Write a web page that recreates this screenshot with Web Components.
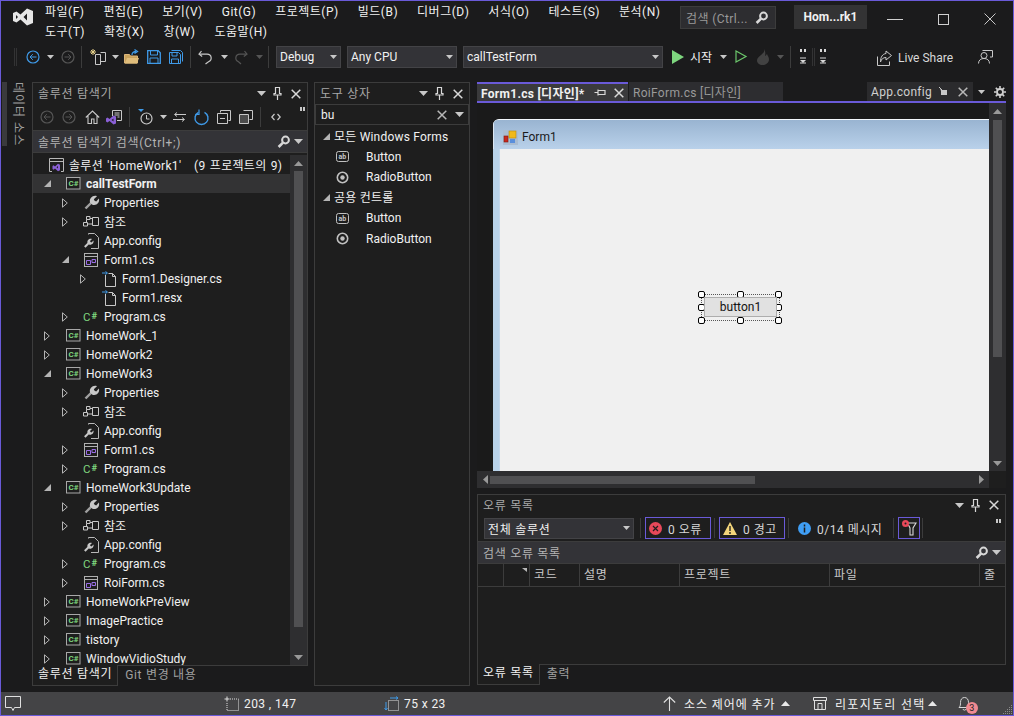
<!DOCTYPE html>
<html lang="ko">
<head>
<meta charset="utf-8">
<title>HomeWork1</title>
<style>
	html, body { margin: 0; padding: 0; background: #1b1b1c; }
	body {
		font: 12px Roboto, "Noto Sans CJK KR", sans-serif;
		color: #f1f1f1;
	}
</style>
</head>
<body>
<vs-app>
	<vs-titlebar slot="title"></vs-titlebar>
	<vs-toolbar slot="tools"></vs-toolbar>
	<vs-side-tab slot="side">데이터 소스</vs-side-tab>
	<vs-solution-explorer slot="left"></vs-solution-explorer>
	<vs-toolbox slot="mid"></vs-toolbox>
	<vs-document-well slot="doc"></vs-document-well>
	<vs-error-list slot="err"></vs-error-list>
	<vs-statusbar slot="status"></vs-statusbar>
</vs-app>

<script>
const GREY = "#c8c8c8";
const BLUE = "#3f9ae8";

// every icon: [width, height, markup]
const ICONS = {
	logo: [20, 18, `<path fill="#e6e6e6" fill-rule="evenodd" d="M14 .5l6 2.5v12l-6 2.5-6.5-6-4 3L0 13V5l3.5-1.500 4 3zM14 5.500L10.500 9 14 12.500zM3 7v4l2-2z"/>`],
	search: [13, 14, `<circle cx="8.500" cy="5" r="3.400" fill="none" stroke="#d8d8d8" stroke-width="2"/><path d="M6 7.600L1.600 12" stroke="#d8d8d8" stroke-width="2.600"/>`],
	min: [16, 1, `<rect width="16" height="1" fill="#d0d0d0"/>`],
	max: [11, 11, `<rect x=".5" y=".5" width="10" height="10" fill="none" stroke="#d0d0d0"/>`],
	winclose: [12, 12, `<path d="M.5.5l11 11M11.500.5l-11 11" stroke="#c8c8c8" fill="none"/>`],
	grip: [5, 18, `<path d="M1 1h3M1 3h3M1 5h3M1 7h3M1 9h3M1 11h3M1 13h3M1 15h3M1 17h3" stroke="#4c4c4c" stroke-dasharray="1 1"/>`],
	back: [14, 14, `<circle cx="7" cy="7" r="6" fill="none" stroke="${BLUE}" stroke-width="1.200"/><path d="M10.500 7H4M6.800 4.200L4 7l2.800 2.800" fill="none" stroke="${BLUE}"/>`],
	backoff: [14, 14, `<circle cx="7" cy="7" r="6" fill="none" stroke="#555" stroke-width="1.200"/><path d="M10.500 7H4M6.800 4.200L4 7l2.800 2.800" fill="none" stroke="#555"/>`],
	fwdoff: [14, 14, `<circle cx="7" cy="7" r="6" fill="none" stroke="#555" stroke-width="1.200"/><path d="M3.500 7H10M7.200 4.200L10 7l-2.800 2.800" fill="none" stroke="#555"/>`],
	arrow: [7, 4, `<path d="M0 0h7L3.500 4z" fill="${GREY}"/>`],
	arrowoff: [7, 4, `<path d="M0 0h7L3.500 4z" fill="#555"/>`],
	arrowup: [9, 5, `<path d="M0 5h9L4.500 0z" fill="#e8e8e8"/>`],
	newproj: [16, 16, `<path d="M3 0v6M0 3h6M1 1l4 4M5 1L1 5" stroke="#e8d28a"/><path d="M5.500 5.500h5v10h-5zM10.500 3.500h5v9h-5" fill="none" stroke="${GREY}"/>`],
	open: [16, 15, `<path d="M.5 5.500h5l1 1.500h7v7H.5z" fill="#c9a25c" stroke="#dcb67a"/><path d="M3 9h12l-2 5.500H.8z" fill="#e0bd7b"/><path d="M8 6c0-2.500 2-3.500 4-3.500M10.500.5l3 2-3 2" fill="none" stroke="${BLUE}" stroke-width="1.300"/>`],
	save: [14, 14, `<path d="M.7.7h10.500l2.100 2.100v10.500H.7z" fill="none" stroke="${BLUE}" stroke-width="1.300"/><path d="M3.500 1v4h7V1M3 13V8h8v5" fill="none" stroke="${BLUE}"/>`],
	saveall: [14, 14, `<path d="M2.500.5h9l2 2v9M.5 2.500h9l2 2v9H.5z" fill="none" stroke="${BLUE}"/><path d="M3 3v3h5V3M2.500 13V9h7v4" fill="none" stroke="${BLUE}"/>`],
	undo: [16, 16, `<path d="M3.500 2L1 5.200l3.200 2.400" fill="none" stroke="${GREY}" stroke-width="1.200"/><path d="M1.500 5.200H9c5 0 5.500 6 1.500 7.500L7.500 15" fill="none" stroke="${GREY}" stroke-width="1.200"/>`],
	redo: [14, 16, `<path d="M10.500 2L13 5.200 9.800 7.600" fill="none" stroke="#555" stroke-width="1.200"/><path d="M12.500 5.200H6C1 5.200.5 11 4.500 12.700L7 15" fill="none" stroke="#555" stroke-width="1.200"/>`],
	play: [12, 14, `<path d="M0 0l12 7-12 7z" fill="#7ed67e"/>`],
	run: [12, 13, `<path d="M1 1l10 5.500L1 12z" fill="none" stroke="#6cc76c" stroke-width="1.200"/>`],
	flame: [14, 16, `<path d="M8 0c1 3-1 4-3 6C3 8 1 9 1 11.500 1 14 3.500 16 6.500 16S13 14 13 10.500C13 8 11.500 7 11 5c-1 1-1.500 2-2 2 .5-2 .5-5-1-7z" fill="#424242"/>`],
	griptop: [6, 16, `<path d="M0 0h2v3H0zM4 0h2v3H4z" fill="#d8d8d8"/><path d="M0 9h6M0 14h6" stroke="#d8d8d8"/><path d="M0 11h6l-3 3z" fill="#d8d8d8"/>`],
	share: [15, 16, `<path d="M.5 6.500v9h12v-4" fill="none" stroke="${GREY}"/><path d="M9 1l5.500 4.500L9 10V7.500C6 7.500 4.500 9 3.500 12 3.500 7 5.500 4 9 3.500z" fill="none" stroke="${GREY}"/>`],
	feedback: [15, 15, `<path d="M4.500 1.500h10v6.500H12" fill="none" stroke="${GREY}"/><circle cx="6" cy="6.500" r="3" fill="none" stroke="${GREY}"/><path d="M.5 14.500c0-3.500 2.500-5 5.500-5s5.500 1.500 5.500 5" fill="none" stroke="${GREY}"/>`],
	drop: [9, 5, `<path d="M0 0h9L4.500 5z" fill="${GREY}"/>`],
	pin: [9, 13, `<path d="M2.500.5h4v6h1.500v1.500H1V6.500h1.500zM4.500 8v5" fill="none" stroke="#d8d8d8" stroke-width="1.200"/>`],
	hpin: [12, 9, `<path d="M.5 4.500H4M4 1.500v6M4 2.500h7v4H4" fill="none" stroke="#d8d8d8" stroke-width="1.200"/>`],
	close: [10, 10, `<path d="M.7.7l8.600 8.600M9.300.7L.7 9.300" stroke="#d8d8d8" stroke-width="1.500"/>`],
	closedim: [10, 10, `<path d="M.7.7l8.600 8.600M9.300.7L.7 9.300" stroke="#b8b8b8" stroke-width="1.500"/>`],
	tabpin: [10, 9, `<path d="M1 1l2 2h5v5H2V4z" fill="#c8c8c8"/><path d="M0 0l3 3" stroke="#c8c8c8"/>`],
	gear: [12, 12, `<circle cx="6" cy="6" r="3" fill="none" stroke="#d0d0d0" stroke-width="1.800"/><path d="M6 0v2.500M6 9.500V12M0 6h2.500M9.500 6H12M1.800 1.800l1.800 1.800M8.400 8.400l1.800 1.800M10.200 1.800L8.400 3.600M3.600 8.400l-1.800 1.800" stroke="#d0d0d0" stroke-width="1.600"/>`],
	home: [15, 14, `<path d="M.8 7.500L7.500 1l6.700 6.500M3 6v7.500h3.500V9h2.500v4.500H12V6" fill="none" stroke="${GREY}" stroke-width="1.100"/>`],
	vsdoc: [16, 15, `<path d="M6.500 6V.5h9v10H11" fill="none" stroke="${GREY}"/><path d="M8.500 3h5M8.500 5h5M11.500 7h2" stroke="${GREY}"/><path d="M0 8.500l1.500-1 2 1.500L7.500 5.500l2.500 1v7l-2.500 1L3.500 11l-2 1.500L0 11.500zM7.500 8.500L5.500 10l2 1.500z" fill="#8a5fd6" fill-rule="evenodd"/>`],
	clock: [15, 16, `<path d="M0 0h6L3 3z" fill="${BLUE}"/><circle cx="8.500" cy="9.500" r="5.500" fill="none" stroke="${GREY}" stroke-width="1.200"/><path d="M8.500 6v4h3" fill="none" stroke="${GREY}"/>`],
	sync: [13, 10, `<path d="M13 2.500H2M4 .5L1.500 2.500 4 4.500M0 7.500h11M9 5.500l2.500 2L9 9.500" fill="none" stroke="${GREY}"/>`],
	refresh: [15, 15, `<path d="M4.500 2.300A6.500 6.500 0 1 0 10.500 2.300" fill="none" stroke="${BLUE}" stroke-width="1.400"/><path d="M4 0v5H.5" fill="none" stroke="${BLUE}" stroke-width="1.200" transform="translate(1 -.5)"/>`],
	collapse: [14, 14, `<path d="M3.500 2.500V.5h10v10h-2" fill="none" stroke="${GREY}"/><path d="M.5 3.500h10v10H.5zM3 8.500h5" fill="none" stroke="${GREY}"/>`],
	copy: [14, 14, `<path d="M4.500.5h9v9h-3" fill="none" stroke="${GREY}"/><path d="M.5 4.500h9v9h-9z" fill="#4c4c4c" stroke="${GREY}"/>`],
	code: [10, 8, `<path d="M3.500 1L.8 4l2.700 3M6.500 1l2.700 3-2.700 3" fill="none" stroke="${GREY}" stroke-width="1.200"/>`],
	chev: [5, 4, `<path d="M0 0h2v4H0zM3 0h2v4H3z" fill="#c8c8c8"/>`],
	solution: [15, 14, `<path d="M3 13.500H.5V.5h14v13H12M.5 3.500h14" fill="none" stroke="#b8b8b8"/><path d="M3.500 8l1-.7 1.500 1.200L9 5.800l2 .9v5.600l-2 .9-3-2.700-1.500 1.200-1-.7zM9 8l-1.500 1.300L9 10.600z" fill="#8a5fd6" fill-rule="evenodd"/>`],
	csproj: [15, 13, `<rect x=".5" y=".5" width="13.500" height="11.500" fill="#1e1e1e" stroke="#a8a8a8"/><text x="2.500" y="9.300" font-size="8" font-weight="700" fill="#7fd67f" font-family="Roboto, sans-serif">C#</text>`],
	cs: [16, 13, `<text x="0" y="11" font-size="11.500" fill="#7fd67f" font-family="Roboto, sans-serif">C</text><text x="8.500" y="8.500" font-size="9.500" font-weight="700" fill="#7fd67f" font-family="Roboto, sans-serif">#</text>`],
	wrench: [15, 15, `<path d="M1.500 13.500L7.500 7.500" stroke="#a0a0a0" stroke-width="2.400"/><path d="M6 7.500C5 3.200 9 -.3 13 1.200L9.800 4.200l.8 1.600 1.600.6 2.700-2.800c1.200 4-2.500 7.600-6.500 6.200z" fill="#c8c8c8"/>`],
	refs: [16, 11, `<path d="M3.500.5h3.500v3H3.500zM.5 6.500h4v3.500h-4zM9.500 1.500h6v8h-6zM7 2.500h2.500M4.500 8h5M3.500 3.500v3" fill="none" stroke="#c8c8c8"/>`],
	config: [15, 16, `<path d="M4.500 1.500V.5h6l4 4v11H7" fill="none" stroke="#b8b8b8"/><path d="M.8 14l4-4" stroke="#c8c8c8" stroke-width="2"/><path d="M3.500 9.800C2.800 7 5.500 5 8 6L6 8l.5 1 1 .5 2-2c.7 2.500-2 5-4.500 4z" fill="#c8c8c8"/>`],
	form: [14, 14, `<rect x=".5" y=".5" width="13" height="13" fill="none" stroke="#b0b0b0"/><path d="M.5 3.500h13" stroke="#b0b0b0"/><path d="M2.500 7.500h4v4h-4zM8 6.500h3.500v3H8z" fill="none" stroke="#9a6fe6"/>`],
	docarrow: [14, 16, `<path d="M3.500 4v11.500h10V5.500l-3-3h-4M10.500 2.500v3h3" fill="none" stroke="#c8c8c8"/><path d="M0 2h5M3.500.5L5.500 2l-2 1.500" fill="none" stroke="${BLUE}"/>`],
	expopen: [7, 7, `<path d="M7 0v7H0z" fill="#b4b4b4"/>`],
	expclosed: [6, 10, `<path d="M.5.800L5.300 5 .5 9.200z" fill="none" stroke="#b4b4b4"/>`],
	ab: [13, 11, `<rect x=".5" y=".5" width="12" height="10" rx="2" fill="none" stroke="#c0c0c0"/><text x="2.600" y="8" font-size="7" font-weight="700" fill="#c8c8c8" font-family="Roboto, sans-serif">ab</text>`],
	radio: [13, 13, `<circle cx="6.500" cy="6.500" r="5.200" fill="none" stroke="#c0c0c0" stroke-width="1.600"/><circle cx="6.500" cy="6.500" r="2.200" fill="#c0c0c0"/>`],
	formicon: [15, 15, `<rect width="15" height="15" fill="#a9bcd2"/><rect x="6" y="1" width="7" height="7" fill="#f0b91a" stroke="#b88a10" stroke-width=".6"/><rect x="1" y="6" width="4" height="6" fill="#c8281e" stroke="#801810" stroke-width=".6"/><rect x="7" y="9" width="5" height="4" fill="#5a8fdc"/>`],
	err: [13, 13, `<circle cx="6.500" cy="6.500" r="6.500" fill="#e8485a"/><path d="M4 4l5 5M9 4L4 9" stroke="#1e1e1e" stroke-width="1.200"/>`],
	warn: [14, 13, `<path d="M7 0l7 13H0z" fill="#f3d57a"/><path d="M7 4v5M7 10v2" stroke="#1e1e1e" stroke-width="1.400"/>`],
	info: [13, 13, `<circle cx="6.500" cy="6.500" r="6.500" fill="#3f9ef5"/><path d="M6.500 2.500v2M6.500 5.500v5" stroke="#1e1e1e" stroke-width="1.500"/>`],
	filter: [14, 16, `<path d="M6 3h8l-3 5v7H8V8L6.500 5" fill="none" stroke="#d8d8d8" stroke-width="1.100"/><circle cx="3.500" cy="3.500" r="3.500" fill="#e8485a"/><circle cx="3.500" cy="3.500" r="1" fill="#1e1e1e"/>`],
	sortmark: [5, 4, `<path d="M0 0h5v4z" fill="#b8b8b8"/>`],
	bubble: [16, 16, `<path d="M.5.5h15v11H9.500l-1.500 3-1.500-3h-6z" fill="none" stroke="#e0e0e0"/>`],
	posbox: [15, 15, `<path d="M3 .5v5M.5 3h5" stroke="#e0e0e0"/><path d="M6 3h8.500v11.500H3V6" fill="none" stroke="#e0e0e0" stroke-dasharray="1 1"/>`],
	sizebox: [15, 15, `<path d="M3.500 14.500v-10h10v10z" fill="none" stroke="#e0e0e0" stroke-dasharray="1 1" transform="translate(1 0)"/><path d="M6 2h8M12 .5l2 1.500-2 1.500M2 6v8M.5 12l1.500 2 1.500-2" fill="none" stroke="${BLUE}"/>`],
	up: [13, 15, `<path d="M6.500 15V1M.8 6.500L6.500 1l5.700 5.500" fill="none" stroke="#e0e0e0" stroke-width="1.100"/>`],
	repo: [14, 13, `<path d="M.5.5h13v3h-13zM1.500 3.500v9h11v-9M5 12V6.500h4V12" fill="none" stroke="#e0e0e0"/>`],
	bell: [13, 15, `<path d="M1 11.500c1.500-1.500 1.500-3 1.500-5 0-3 1.500-5 4-5s4 2 4 5c0 2 0 3.500 1.500 5zM5 13c0 1.500 3 1.500 3 0" fill="none" stroke="#d8d8d8"/>`],
	corner: [12, 12, `<path d="M10 2h1v1h-1zM8 4h1v1H8zM10 4h1v1h-1zM6 6h1v1H6zM8 6h1v1H8zM10 6h1v1h-1zM4 8h1v1H4zM6 8h1v1H6zM8 8h1v1H8zM10 8h1v1h-1zM2 10h1v1H2zM4 10h1v1H4zM6 10h1v1H6zM8 10h1v1H8zM10 10h1v1h-1z" fill="#8a8a8a"/>`]
};

class VsIcon
extends HTMLElement
{
	connectedCallback ()
	{
		if (this.shadowRoot) return;
		let [w, h, body] = ICONS[this.getAttribute("name")];
		this.attachShadow({mode:"open"});
		this.shadowRoot.innerHTML = `
			<style>
				:host { display: block; flex: none; width: ${w}px; height: ${h}px; }
				svg { display: block; overflow: visible; }
			</style>
			<svg width="${w}" height="${h}" viewBox="0 0 ${w} ${h}">${body}</svg>
		`;
	}
}

// small helper for classes which only hold static markup
function staticElement (tag, html)
{
	customElements.define(tag, class extends HTMLElement {
		constructor ()
		{
			super();
			this.attachShadow({mode:"open"});
			this.shadowRoot.innerHTML = html;
		}
	});
}

staticElement("vs-app", `
	<style>
		:host {
			display: grid;
			box-sizing: border-box;
			width: 1014px;
			height: 716px;
			overflow: hidden;
			border: 1px solid #6a5ad8;
			background: #1b1b1c;
			grid-template-rows: 42px 27px 1fr 23px;
		}
		#dock {
			display: flex;
			min-height: 0;
			padding: 12px 7px 6px 0;
		}
		#leftcol { width: 31px; flex: none; }
		#sol { width: 276px; flex: none; display: flex; }
		#tb { width: 156px; flex: none; margin-left: 6px; display: flex; }
		#right {
			flex: 1;
			margin-left: 7px;
			display: grid;
			grid-template-rows: 406px 191px;
			row-gap: 6px;
			min-width: 0;
		}
	</style>
	<slot name="title"></slot>
	<slot name="tools"></slot>
	<div id="dock">
		<div id="leftcol"><slot name="side"></slot></div>
		<div id="sol"><slot name="left"></slot></div>
		<div id="tb"><slot name="mid"></slot></div>
		<div id="right"><slot name="doc"></slot><slot name="err"></slot></div>
	</div>
	<slot name="status"></slot>
`);

staticElement("vs-titlebar", `
	<style>
		:host { display: flex; position: relative; }
		vs-icon[name=logo] { margin: 7px 0 0 12px; }
		#menu {
			display: flex;
			flex-wrap: wrap;
			align-content: flex-start;
			gap: 3px 19px;
			width: 635px;
			margin: 3px 0 0 12px;
			color: #f1f1f1;
			line-height: 17px;
			letter-spacing: .5px;
		}
		#search {
			display: flex;
			align-items: center;
			justify-content: space-between;
			box-sizing: border-box;
			width: 96px;
			height: 23px;
			margin: 5px 0 0 0;
			padding: 0 7px 0 5px;
			background: #2d2d30;
			border: 1px solid #3c3c3c;
			color: #999;
			letter-spacing: .4px;
		}
		#name {
			box-sizing: border-box;
			width: 73px;
			height: 24px;
			margin: 4px 0 0 18px;
			background: #333334;
			font-weight: 700;
			line-height: 24px;
			text-align: center;
			color: #f1f1f1;
		}
		#ctl { display: flex; align-items: center; height: 36px; }
		#ctl vs-icon:nth-child(1) { margin-left: 20px; }
		#ctl vs-icon:nth-child(2) { margin-left: 35px; }
		#ctl vs-icon:nth-child(3) { margin-left: 35px; }
	</style>
	<vs-icon name="logo"></vs-icon>
	<div id="menu">
		<span>파일(F)</span><span>편집(E)</span><span>보기(V)</span><span>Git(G)</span><span>프로젝트(P)</span><span>빌드(B)</span><span>디버그(D)</span><span>서식(O)</span><span>테스트(S)</span><span>분석(N)</span>
		<span>도구(T)</span><span>확장(X)</span><span>창(W)</span><span>도움말(H)</span>
	</div>
	<div id="search"><span>검색 (Ctrl...</span><vs-icon name="search"></vs-icon></div>
	<div id="name">Hom...rk1</div>
	<div id="ctl"><vs-icon name="min"></vs-icon><vs-icon name="max"></vs-icon><vs-icon name="winclose"></vs-icon></div>
`);

class VsCombo
extends HTMLElement
{
	constructor ()
	{
		super();
		this.attachShadow({mode:"open"});
		this.shadowRoot.innerHTML = `
			<style>
				:host {
					display: flex;
					flex: none;
					align-items: center;
					justify-content: space-between;
					box-sizing: border-box;
					height: 22px;
					padding: 0 3px 0 3px;
					background: #333337;
					border: 1px solid #434346;
					color: #f1f1f1;
				}
			</style>
			<span><slot></slot></span><vs-icon name="arrow"></vs-icon>
		`;
	}
}

staticElement("vs-toolbar", `
	<style>
		:host { display: flex; align-items: center; height: 27px; }
		i { display: block; flex: none; width: 1px; height: 22px; background: #3c3c3c; }
	</style>
	<vs-icon name="grip" style="margin-left:12px"></vs-icon>
	<vs-icon name="back" style="margin-left:8px"></vs-icon>
	<vs-icon name="arrow" style="margin-left:7px"></vs-icon>
	<vs-icon name="fwdoff" style="margin-left:7px"></vs-icon>
	<i style="margin-left:6px"></i>
	<vs-icon name="newproj" style="margin-left:8px"></vs-icon>
	<vs-icon name="arrow" style="margin-left:6px"></vs-icon>
	<vs-icon name="open" style="margin-left:5px"></vs-icon>
	<vs-icon name="save" style="margin-left:7px"></vs-icon>
	<vs-icon name="saveall" style="margin-left:8px"></vs-icon>
	<i style="margin-left:7px"></i>
	<vs-icon name="undo" style="margin-left:7px"></vs-icon>
	<vs-icon name="arrow" style="margin-left:7px"></vs-icon>
	<vs-icon name="redo" style="margin-left:6px"></vs-icon>
	<vs-icon name="arrowoff" style="margin-left:8px"></vs-icon>
	<i style="margin-left:5px"></i>
	<vs-combo style="margin-left:7px;width:65px">Debug</vs-combo>
	<vs-combo style="margin-left:6px;width:110px">Any CPU</vs-combo>
	<vs-combo style="margin-left:6px;width:200px">callTestForm</vs-combo>
	<vs-icon name="play" style="margin-left:9px"></vs-icon>
	<span style="margin-left:6px;width:24px;flex:none;white-space:nowrap">시작</span>
	<vs-icon name="arrow" style="margin-left:6px"></vs-icon>
	<vs-icon name="run" style="margin-left:8px"></vs-icon>
	<vs-icon name="flame" style="margin-left:9px"></vs-icon>
	<vs-icon name="arrowoff" style="margin-left:7px"></vs-icon>
	<i style="margin-left:6px"></i>
	<vs-icon name="griptop" style="margin-left:9px"></vs-icon>
	<vs-icon name="grip" style="margin-left:5px"></vs-icon>
	<vs-icon name="griptop" style="margin-left:4px"></vs-icon>
	<vs-icon name="share" style="margin-left:51px;margin-top:2px"></vs-icon>
	<span style="margin-left:6px;width:56px;flex:none;margin-top:2px;color:#d8d8d8;white-space:nowrap">Live Share</span>
	<vs-icon name="feedback" style="margin-left:24px"></vs-icon>
`);

staticElement("vs-side-tab", `
	<style>
		:host {
			display: block;
			box-sizing: border-box;
			height: 64px;
			margin-left: 1px;
			border-left: 5px solid #3a3a3c;
			writing-mode: vertical-rl;
			text-orientation: sideways;
			color: #a0a0a0;
			font-size: 12px;
			line-height: 14px;
			padding-left: 4px;
			white-space: nowrap;
			letter-spacing: 1px;
		}
	</style>
	<slot></slot>
`);

staticElement("vs-panel-header", `
	<style>
		:host {
			display: flex;
			align-items: center;
			flex: none;
			height: 21px;
			padding: 0 6px 0 5px;
			color: #a8a8a8;
			letter-spacing: .7px;
		}
		span { flex: 1; white-space: nowrap; margin-top: -2px; }
		vs-icon[name=pin] { margin-left: 7px; }
		vs-icon[name=close] { margin-left: 9px; }
	</style>
	<span><slot></slot></span>
	<vs-icon name="drop"></vs-icon><vs-icon name="pin"></vs-icon><vs-icon name="close"></vs-icon>
`);

staticElement("vs-search-bar", `
	<style>
		:host {
			display: flex;
			align-items: center;
			flex: none;
			height: 21px;
			padding: 0 4px 0 5px;
			background: #333337;
			border-top: 1px solid #3c3c3c;
			border-bottom: 1px solid #3c3c3c;
			color: #b4b4b4;
			letter-spacing: .7px;
		}
		span { flex: 1; white-space: nowrap; }
		vs-icon[name=drop] { margin-left: 4px; width: 9px; }
	</style>
	<span><slot></slot></span><vs-icon name="search"></vs-icon><vs-icon name="drop"></vs-icon>
`);

staticElement("vs-dock-tabs", `
	<style>
		:host { display: flex; flex: none; height: 20px; letter-spacing: .7px; }
		::slotted(b) {
			font-weight: 400;
			padding: 0 5px;
			line-height: 19px;
			color: #f1f1f1;
			background: #1e1e1e;
			border: 1px solid #3c3c3c;
			border-top: none;
			box-sizing: border-box;
			margin-top: -1px;
			height: 21px;
			position: relative;
			white-space: nowrap;
		}
		::slotted(span) { padding: 0 6px 0 7px; line-height: 19px; color: #a0a0a0; white-space: nowrap; }
	</style>
	<slot></slot>
`);

class VsTreeRow
extends HTMLElement
{
	connectedCallback ()
	{
		if (this.shadowRoot) return;
		let level = +this.getAttribute("level");
		let exp = this.getAttribute("exp");
		let icon = this.getAttribute("icon");
		this.attachShadow({mode:"open"});
		let expander = exp ? `<vs-icon name="exp${exp}"></vs-icon>` : "";
		this.shadowRoot.innerHTML = `
			<style>
				:host {
					display: flex;
					align-items: center;
					height: 19px;
					padding-left: ${icon == "solution" ? 15 : 6 + 18 * level}px;
					white-space: nowrap;
					color: #f1f1f1;
				}
				:host([sel]) { background: #333334; font-weight: 700; }
				#exp {
					display: ${icon == "solution" ? "none" : "flex"};
					flex: none;
					justify-content: center;
					width: 16px;
					margin-right: 10px;
				}
				#ic { width: 16px; flex: none; display: flex; justify-content: center; margin-right: 5px; }
			</style>
			<div id="exp">${expander}</div>
			<div id="ic"><vs-icon name="${icon}"></vs-icon></div>
			<slot></slot>
		`;
	}
}

// up/down arrows and thumb, used by the three scrollbars
class VsScrollbar
extends HTMLElement
{
	connectedCallback ()
	{
		if (this.shadowRoot) return;
		let horiz = this.hasAttribute("horizontal");
		let before = this.getAttribute("before");
		let size = this.getAttribute("size");
		this.attachShadow({mode:"open"});
		this.shadowRoot.innerHTML = `
			<style>
				:host {
					display: flex;
					flex-direction: ${horiz ? "row" : "column"};
					box-sizing: border-box;
					background: #2e2e30;
					align-items: center;
					overflow: hidden;
				}
				b {
					flex: none;
					width: ${horiz ? "16px" : "100%"};
					height: ${horiz ? "100%" : "16px"};
					display: flex;
					align-items: center;
					justify-content: center;
				}
				b svg { display: block; }
				#t { flex: 1; align-self: stretch; display: flex; flex-direction: ${horiz ? "row" : "column"}; align-items: center; }
				#th {
					background: #505052;
					${horiz ? `width:${size}px;height:8px;margin-left:${before}px` : `height:${size}px;width:9px;margin-top:${before}px`};
				}
			</style>
			<b><svg width="9" height="9" viewBox="0 0 9 9"><path d="${horiz ? "M7 0v9L2 4.500z" : "M0 7h9L4.500 2z"}" fill="#999"/></svg></b>
			<div id="t"><div id="th"></div></div>
			<b><svg width="9" height="9" viewBox="0 0 9 9"><path d="${horiz ? "M2 0v9l5-4.500z" : "M0 2h9L4.500 7z"}" fill="#999"/></svg></b>
		`;
	}
}

const TREE = [
	[0, null, "solution", `<span style="letter-spacing:.3px;word-spacing:1px">솔루션 'HomeWork1'&nbsp;&nbsp; (9 프로젝트의 9)</span>`],
	[0, "open", "csproj", "callTestForm", true],
	[1, "closed", "wrench", "Properties"],
	[1, "closed", "refs", "참조"],
	[1, null, "config", "App.config"],
	[1, "open", "form", "Form1.cs"],
	[2, "closed", "docarrow", "Form1.Designer.cs"],
	[2, null, "docarrow", "Form1.resx"],
	[1, "closed", "cs", "Program.cs"],
	[0, "closed", "csproj", "HomeWork_1"],
	[0, "closed", "csproj", "HomeWork2"],
	[0, "open", "csproj", "HomeWork3"],
	[1, "closed", "wrench", "Properties"],
	[1, "closed", "refs", "참조"],
	[1, null, "config", "App.config"],
	[1, "closed", "form", "Form1.cs"],
	[1, "closed", "cs", "Program.cs"],
	[0, "open", "csproj", "HomeWork3Update"],
	[1, "closed", "wrench", "Properties"],
	[1, "closed", "refs", "참조"],
	[1, null, "config", "App.config"],
	[1, "closed", "cs", "Program.cs"],
	[1, "closed", "form", "RoiForm.cs"],
	[0, "closed", "csproj", "HomeWorkPreView"],
	[0, "closed", "csproj", "ImagePractice"],
	[0, "closed", "csproj", "tistory"],
	[0, "closed", "csproj", "WindowVidioStudy"]
];

class VsSolutionExplorer
extends HTMLElement
{
	constructor ()
	{
		super();
		this.attachShadow({mode:"open"});
		let rows = TREE.map(r =>
			`<vs-tree-row level="${r[0]}" ${r[1] ? `exp="${r[1]}"` : ""} icon="${r[2]}" ${r[4] ? "sel" : ""}>${r[3]}</vs-tree-row>`
		).join("");
		this.shadowRoot.innerHTML = `
			<style>
				:host { display: flex; flex-direction: column; width: 100%; }
				#box {
					flex: 1;
					min-height: 0;
					display: flex;
					flex-direction: column;
					border: 1px solid #3c3c3c;
					background: #1e1e1e;
				}
				#tools { display: flex; align-items: center; flex: none; height: 26px; position: relative; }
				#tools i { display: block; flex: none; width: 1px; height: 20px; background: #3c3c3c; }
				#main { flex: 1; min-height: 0; display: flex; }
				#rows { flex: 1; min-width: 0; overflow: hidden; }
				vs-scrollbar { width: 17px; flex: none; }
				vs-search-bar { margin-bottom: 2px; }
				#chev { position: absolute; left: 267px; top: 3px; }
			</style>
			<div id="box">
				<vs-panel-header>솔루션 탐색기</vs-panel-header>
				<div id="tools">
					<vs-icon name="backoff" style="margin-left:7px"></vs-icon>
					<vs-icon name="fwdoff" style="margin-left:8px"></vs-icon>
					<vs-icon name="home" style="margin-left:9px"></vs-icon>
					<vs-icon name="vsdoc" style="margin-left:6px"></vs-icon>
					<i style="margin-left:7px"></i>
					<vs-icon name="clock" style="margin-left:8px"></vs-icon>
					<vs-icon name="arrow" style="margin-left:7px"></vs-icon>
					<vs-icon name="sync" style="margin-left:6px"></vs-icon>
					<vs-icon name="refresh" style="margin-left:8px"></vs-icon>
					<vs-icon name="collapse" style="margin-left:8px"></vs-icon>
					<vs-icon name="copy" style="margin-left:8px"></vs-icon>
					<i style="margin-left:7px"></i>
					<vs-icon name="code" style="margin-left:10px"></vs-icon>
					<vs-icon name="chev" id="chev"></vs-icon>
				</div>
				<vs-search-bar>솔루션 탐색기 검색(Ctrl+;)</vs-search-bar>
				<div id="main">
					<div id="rows">${rows}</div>
					<vs-scrollbar before="0" size="456"></vs-scrollbar>
				</div>
			</div>
			<vs-dock-tabs><b>솔루션 탐색기</b><span>Git 변경 내용</span></vs-dock-tabs>
		`;
	}
}

staticElement("vs-toolbox", `
	<style>
		:host {
			display: flex;
			flex-direction: column;
			width: 100%;
			box-sizing: border-box;
			border: 1px solid #3c3c3c;
			background: #1e1e1e;
		}
		#find {
			display: flex;
			align-items: center;
			flex: none;
			height: 19px;
			padding: 0 4px 0 5px;
			border: 1px solid #3c3c3c;
			margin-bottom: 1.400px;
			color: #f1f1f1;
		}
		#find span { flex: 1; }
		#find vs-icon[name=drop] { margin-left: 8px; }
		.g, .r { display: flex; align-items: center; box-sizing: border-box; height: 20.400px; white-space: nowrap; }
		.g { letter-spacing: .2px; padding-bottom: 2px; }
		.g vs-icon { margin: 2px 5px 0 8px; width: 6px; }
		.r vs-icon { margin: 0 17px 0 21px; }
	</style>
	<vs-panel-header>도구 상자</vs-panel-header>
	<div id="find"><span>bu</span><vs-icon name="closedim"></vs-icon><vs-icon name="drop"></vs-icon></div>
	<div class="g"><vs-icon name="expopen"></vs-icon>모든 Windows Forms</div>
	<div class="r"><vs-icon name="ab"></vs-icon>Button</div>
	<div class="r"><vs-icon name="radio"></vs-icon>RadioButton</div>
	<div class="g"><vs-icon name="expopen"></vs-icon>공용 컨트롤</div>
	<div class="r"><vs-icon name="ab"></vs-icon>Button</div>
	<div class="r"><vs-icon name="radio"></vs-icon>RadioButton</div>
`);

staticElement("vs-doc-tab", `
	<style>
		:host {
			display: flex;
			align-items: center;
			flex: none;
			box-sizing: border-box;
			height: 19px;
			padding: 0 0 0 4px;
			background: #2d2d30;
			color: #9a9a9a;
			white-space: nowrap;
			letter-spacing: .3px;
		}
		:host([active]) {
			height: 19px;
			background: #3a3a3c;
			border-top: 2px solid #6a5ad8;
			color: #f1f1f1;
			font-weight: 700;
		}
	</style>
	<slot></slot>
`);

staticElement("vs-designer-form", `
	<style>
		:host {
			display: flex;
			flex-direction: column;
			flex: 1;
			min-width: 0;
			border-top: 1px solid #f4f8fc;
			border-top-left-radius: 6px;
			overflow: hidden;
			background: #b9d3ea;
		}
		#cap {
			display: flex;
			align-items: center;
			flex: none;
			box-sizing: border-box;
			height: 29px;
			padding: 5px 0 0 9px;
			gap: 4px;
			color: #1a1a1a;
			background: linear-gradient(#99b4d1, #b9d1ea);
			border-left: 1px solid #dce7f3;
		}
		#client {
			flex: 1;
			position: relative;
			margin-left: 6px;
			background: #f0f0f0;
			border-left: 1px solid #c4d8ec;
		}
		#btn {
			position: absolute;
			left: 204px;
			top: 148px;
			width: 73px;
			height: 20px;
			box-sizing: border-box;
			background: #e1e1e1;
			border: 1px solid #adadad;
			color: #111;
			font-size: 12px;
			line-height: 18px;
			text-align: center;
		}
		#sel {
			position: absolute;
			left: 201px;
			top: 145px;
			width: 77px;
			height: 25px;
			border: 1px dotted #555;
		}
		#sel i {
			position: absolute;
			width: 5px;
			height: 5px;
			background: #fff;
			border: 1px solid #000;
			border-radius: 2px;
		}
	</style>
	<div id="cap"><vs-icon name="formicon"></vs-icon>Form1</div>
	<div id="client">
		<div id="sel">
			<i style="left:-4px;top:-4px"></i><i style="left:35px;top:-4px"></i><i style="left:73px;top:-4px"></i>
			<i style="left:-4px;top:9px"></i><i style="left:73px;top:9px"></i>
			<i style="left:-4px;top:22px"></i><i style="left:35px;top:22px"></i><i style="left:73px;top:22px"></i>
		</div>
		<div id="btn">button1</div>
	</div>
`);

staticElement("vs-document-well", `
	<style>
		:host { display: flex; flex-direction: column; min-height: 0; }
		#tabs {
			display: flex;
			flex: none;
			height: 19px;
			border-bottom: 2px solid #6a5ad8;
		}
		#tabs vs-doc-tab { height: 19px; }
		#view {
			flex: 1;
			min-height: 0;
			display: grid;
			grid-template-columns: 1fr 17px;
			grid-template-rows: 1fr 17px;
		}
		#canvas { display: flex; padding: 16px 0 0 16px; min-width: 0; min-height: 0; overflow: hidden; background: #1a1a1a; }
		#corner { background: #1e1e1e; }
		#h { grid-column: 1; grid-row: 2; }
		#v { grid-column: 2; grid-row: 1; }
	</style>
	<div id="tabs">
		<vs-doc-tab active style="width:151px">Form1.cs [디자인]*<vs-icon name="hpin" style="margin-left:auto"></vs-icon><vs-icon name="close" style="margin:0 4px 0 8px"></vs-icon></vs-doc-tab>
		<vs-doc-tab style="width:154px;margin-left:1px">RoiForm.cs [디자인]</vs-doc-tab>
		<vs-doc-tab style="width:106px;margin-left:84px;background:#2b2b2d;color:#d0d0d0">App.config<vs-icon name="tabpin" style="margin-left:auto"></vs-icon><vs-icon name="closedim" style="margin:0 5px 0 9px"></vs-icon></vs-doc-tab>
		<vs-icon name="arrow" style="margin:8px 0 0 5px"></vs-icon>
		<vs-icon name="gear" style="margin:4px 0 0 9px"></vs-icon>
	</div>
	<div id="view">
		<div id="canvas"><vs-designer-form></vs-designer-form></div>
		<vs-scrollbar id="v" before="1" size="237"></vs-scrollbar>
		<vs-scrollbar id="h" horizontal before="-3" size="265"></vs-scrollbar>
		<div id="corner"></div>
	</div>
`);

staticElement("vs-toggle", `
	<style>
		:host {
			display: flex;
			flex: none;
			align-items: center;
			box-sizing: border-box;
			height: 22px;
			padding: 0 3px;
			gap: 6px;
			border: 1px solid transparent;
			color: #d8d8d8;
			white-space: nowrap;
			letter-spacing: .5px;
		}
		:host([on]) { border-color: #6a5ad8; }
	</style>
	<slot></slot>
`);

staticElement("vs-error-list", `
	<style>
		:host { display: flex; flex-direction: column; min-height: 0; }
		#box {
			flex: 1;
			min-height: 0;
			display: flex;
			flex-direction: column;
			border: 1px solid #3c3c3c;
			background: #1e1e1e;
		}
		#bar { display: flex; align-items: center; flex: none; height: 26px; position: relative; }
		#bar i { display: block; flex: none; width: 1px; height: 20px; background: #3c3c3c; }
		#bar vs-combo { height: 21px; letter-spacing: .7px; }
		#chev { position: absolute; left: 518px; top: 4px; }
		#cols {
			display: grid;
			flex: none;
			grid-template-columns: 26px 26px 50px 100px 150px 150px 1fr;
			height: 22px;
			border-bottom: 1px solid #3c3c3c;
			color: #c8c8c8;
			letter-spacing: .7px;
		}
		#cols span {
			display: block;
			position: relative;
			padding-left: 4px;
			line-height: 22px;
			border-right: 1px solid #3c3c3c;
		}
		#cols span:last-child { border-right: none; }
		#cols vs-icon { position: absolute; right: 2px; top: 4px; }
		#main { flex: 1; }
	</style>
	<div id="box">
		<vs-panel-header style="height:20px;color:#a8a8a8">오류 목록</vs-panel-header>
		<div id="bar">
			<vs-combo style="width:150px;margin-left:6px">전체 솔루션</vs-combo>
			<i style="margin-left:6px"></i>
			<vs-toggle on style="margin-left:4px;width:66px"><vs-icon name="err"></vs-icon>0 오류</vs-toggle>
			<i style="margin-left:3px"></i>
			<vs-toggle on style="margin-left:4px;width:66px"><vs-icon name="warn"></vs-icon>0 경고</vs-toggle>
			<i style="margin-left:3px"></i>
			<vs-toggle style="margin-left:5px"><vs-icon name="info"></vs-icon>0/14 메시지</vs-toggle>
			<i style="margin-left:7px"></i>
			<vs-toggle on style="margin-left:4px;width:22px"><vs-icon name="filter"></vs-icon></vs-toggle>
			<i style="margin-left:2px"></i>
			<vs-icon name="chev" id="chev"></vs-icon>
		</div>
		<vs-search-bar>검색 오류 목록</vs-search-bar>
		<div id="cols">
			<span></span><span><vs-icon name="sortmark"></vs-icon></span><span>코드</span><span>설명</span><span>프로젝트</span><span>파일</span><span>줄</span>
		</div>
		<div id="main"></div>
	</div>
	<vs-dock-tabs><b>오류 목록</b><span>출력</span></vs-dock-tabs>
`);

staticElement("vs-statusbar", `
	<style>
		:host {
			display: flex;
			align-items: center;
			height: 23px;
			background: #444446;
			color: #f1f1f1;
			white-space: nowrap;
			position: relative;
			letter-spacing: .4px;
		}
		#badge {
			position: absolute;
			left: 965px;
			top: 10px;
			width: 12px;
			height: 12px;
			border-radius: 6px;
			background: #f08a92;
			color: #222;
			font-size: 9px;
			line-height: 12px;
			text-align: center;
		}
	</style>
	<vs-icon name="bubble" style="margin-left:4px"></vs-icon>
	<vs-icon name="posbox" style="margin-left:203px"></vs-icon>
	<span style="margin-left:5px;width:53px">203 , 147</span>
	<vs-icon name="sizebox" style="margin-left:87px"></vs-icon>
	<span style="margin-left:5px;width:41px">75 x 23</span>
	<vs-icon name="up" style="margin-left:218px"></vs-icon>
	<span style="margin-left:8px;width:92px;letter-spacing:.9px">소스 제어에 추가</span>
	<vs-icon name="arrowup" style="margin-left:5px"></vs-icon>
	<vs-icon name="repo" style="margin-left:23px"></vs-icon>
	<span style="margin-left:8px;width:86px;letter-spacing:1.300px">리포지토리 선택</span>
	<vs-icon name="arrowup" style="margin-left:7px"></vs-icon>
	<vs-icon name="bell" style="margin-left:21px"></vs-icon>
	<div id="badge">3</div>
	<vs-icon name="corner" style="margin-left:auto;align-self:flex-end"></vs-icon>
`);

customElements.define("vs-icon", VsIcon);
customElements.define("vs-combo", VsCombo);
customElements.define("vs-tree-row", VsTreeRow);
customElements.define("vs-scrollbar", VsScrollbar);
customElements.define("vs-solution-explorer", VsSolutionExplorer);
</script>
</body>
</html>
